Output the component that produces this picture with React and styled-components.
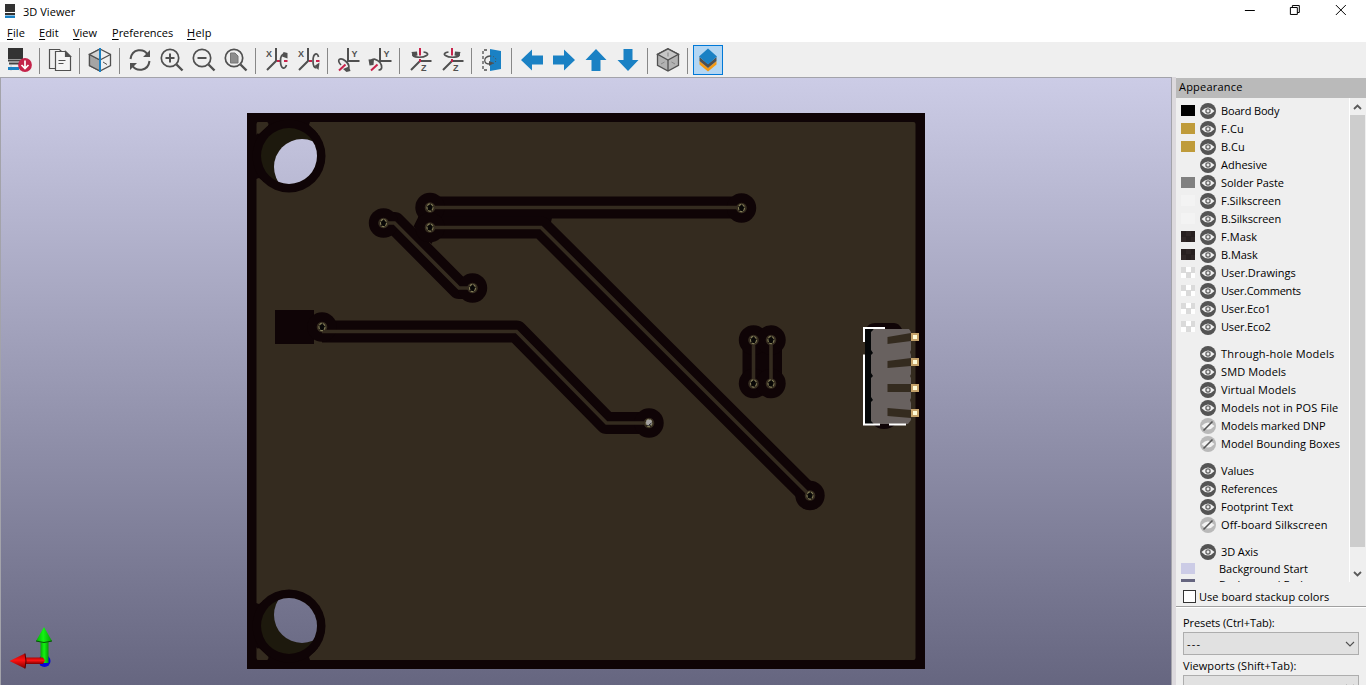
import React from "react";
import styled, { createGlobalStyle } from "styled-components";

const GlobalStyle = createGlobalStyle`
  * { box-sizing: border-box; }
  body { margin: 0; overflow: hidden; }
`;

const Window = styled.div`
  width: 1366px;
  height: 685px;
  display: flex;
  flex-direction: column;
  overflow: hidden;
  background: #fff;
  color: #000;
  font-family: "Open Sans", "Noto Sans", sans-serif;
  font-size: 11px;
`;

const TitleBar = styled.header`
  height: 24px;
  flex: none;
  display: flex;
  align-items: center;
  padding-left: 4px;
`;

const AppIcon = styled.svg`
  width: 12px;
  height: 16px;
  margin: 0 1px 3px 0;
`;

const Title = styled.span`
  flex: 1;
  margin-left: 6px;
  line-height: 22px;
  letter-spacing: 0.04px;
`;

const WindowButtons = styled.div`
  display: flex;
  width: 137px;
  height: 24px;
`;

const WindowButton = styled.svg`
  flex: 1;
  height: 22px;
  fill: none;
  stroke: #000;
  stroke-width: 1;
`;

const MenuBar = styled.nav`
  height: 18px;
  flex: none;
  display: flex;
  padding-left: 7px;
`;

const MenuItem = styled.span`
  width: ${(p) => p.$width}px;
  line-height: 17px;
  letter-spacing: ${(p) => p.$spacing || 0}px;
  white-space: nowrap;
  u { text-underline-offset: 2px; }
`;

const Toolbar = styled.div`
  height: 35px;
  flex: none;
  display: flex;
  align-items: center;
  padding-left: 4px;
  background: #efefef;
`;

const ToolButton = styled.div`
  width: ${(p) => (p.$active ? 30 : 32)}px;
  height: 30px;
  margin: 1px ${(p) => (p.$active ? 1 : 0)}px 0;
  display: flex;
  align-items: center;
  justify-content: center;
  border: ${(p) => (p.$active ? "1px solid #0078d7" : "none")};
  background: ${(p) => (p.$active ? "#b3d6f3" : "transparent")};
`;

const ToolSeparator = styled.div`
  width: 1px;
  height: 26px;
  margin: 2px 4px 0 3px;
  background: #878787;
`;

const ToolIcon = styled.svg`
  width: 24px;
  height: 24px;
  display: block;
  fill: none;
  stroke: #505050;
  stroke-width: 2;
  overflow: visible;
  text {
    font: 700 9px "Liberation Sans", sans-serif;
    fill: #505050;
    stroke: none;
  }
`;

const Workspace = styled.main`
  flex: 1;
  min-height: 0;
  display: flex;
  background: #efefef;
`;

const Viewport = styled.svg`
  width: 1172px;
  height: 608px;
  flex: none;
  display: block;
`;

const Panel = styled.aside`
  width: 194px;
  height: 608px;
  flex: none;
  display: flex;
  flex-direction: column;
  border-left: 4px solid #dcd9dd;
  background: #efefef;
`;

const PanelTitle = styled.div`
  height: 20px;
  margin-top: 1px;
  flex: none;
  padding-left: 3px;
  line-height: 17px;
  letter-spacing: 0.2px;
  background: #bababa;
`;

const ScrollArea = styled.div`
  height: 484px;
  flex: none;
  display: flex;
  overflow: hidden;
`;

const LayerList = styled.div`
  width: 174px;
  padding-top: 4px;
  border-right: 1px solid #fff;
`;

const LayerRow = styled.div`
  height: ${(p) => (p.$plain ? 16 : 18)}px;
  margin-top: ${(p) => (p.$gap ? 9 : 0)}px;
  padding-left: 5px;
  display: flex;
  align-items: center;
`;

const Swatch = styled.span`
  width: 14px;
  height: 11px;
  margin: 0 5px 1px 0;
  background: ${(p) => p.$fill};
`;

const EyeIcon = styled.svg`
  width: 16px;
  height: 16px;
  flex: none;
  visibility: ${(p) => (p.$hidden ? "hidden" : "visible")};
`;

const LayerName = styled.span`
  margin-left: ${(p) => (p.$tight ? 3 : 5)}px;
  white-space: nowrap;
  line-height: 16px;
  letter-spacing: ${(p) => p.$spacing}px;
`;

const Scrollbar = styled.div`
  width: 15px;
  display: flex;
  flex-direction: column;
`;

const ScrollArrow = styled.svg`
  width: 15px;
  height: 17px;
  flex: none;
  fill: none;
  stroke: #5a5a5a;
  stroke-width: 1.8;
`;

const ScrollThumb = styled.div`
  height: 432px;
  flex: none;
  margin-bottom: auto;
  background: #cdcdcd;
`;

const StackupOption = styled.label`
  height: 24px;
  flex: none;
  display: flex;
  align-items: center;
  padding: 5px 0 0 7px;
  letter-spacing: 0.03px;
`;

const CheckBox = styled.span`
  width: 13px;
  height: 13px;
  margin-right: 3px;
  border: 1px solid #333;
  background: #fff;
`;

const Divider = styled.div`
  height: 2px;
  flex: none;
  background: #a0a0a0;
  border-bottom: 1px solid #fff;
`;

const PresetGroup = styled.div`
  padding: 6px 7px 0;
`;

const PresetLabel = styled.div`
  height: 18px;
  line-height: 18px;
  letter-spacing: ${(p) => p.$spacing || 0}px;
`;

const Dropdown = styled.div`
  height: 23px;
  margin-bottom: 2px;
  padding: 0 3px;
  display: flex;
  align-items: center;
  justify-content: space-between;
  border: 1px solid #adadad;
  background: #e1e1e1;
  letter-spacing: 1.2px;
`;

const DropArrow = styled.svg`
  width: 10px;
  height: 8px;
  fill: none;
  stroke: #505050;
  stroke-width: 1.1;
`;

const Chip = () => (
  <>
    <path d="M0 0h15v11H0z" fill="#333" stroke="none" />
    <path d="M0 11.500h15v2H0zM1 14.500h13v2H1z" fill="#444" stroke="none" />
    <path d="M3 17v6M12 17v6" stroke="#ccc" strokeWidth="1" />
    <path d="M0 19h11v3H0z" fill="#1a81c4" stroke="none" />
  </>
);

const Rotation = ({ axis, reverse }) => {
  if (axis === "X")
    return (
      <>
        <text x="2" y="8.700">X</text>
        <path d="M12 0v13L3 22" />
        <path d="M13 13h3M20 13h3.500" stroke="#c8234b" />
        {reverse ? (
          <>
            <path d="M22.500 9c-1-5-5.500-4-5.500 4 0 5 1.500 7 3.500 7" strokeWidth="1.700" />
            <path d="m23.500 14.500-5 3.500 4 4z" fill="#505050" stroke="none" />
          </>
        ) : (
          <>
            <path d="M20.500 6c-2 0-4 2-4 7 0 8 4.500 9 6 4" strokeWidth="1.700" />
            <path d="m18 8.500 1.500-4.500 4 1v5.500z" fill="#505050" stroke="none" />
          </>
        )}
      </>
    );
  if (axis === "Y")
    return (
      <>
        <text x="15.500" y="8.700">Y</text>
        <path d="M12 0v13h11.500" />
        <path d="m9.500 16.500-6.500 6" stroke="#c8234b" />
        {reverse ? (
          <>
            <path d="M3 13c2-3 6-2 9 1.500 3 4 2 7.500-1.500 7.500" strokeWidth="1.700" />
            <path d="M.5 11.500 6 11l-.5 6-4 .5z" fill="#505050" stroke="none" />
          </>
        ) : (
          <>
            <path d="M5 17C0 12 4 8.500 9.500 13c4 3.500 4 6 2.500 8" strokeWidth="1.700" />
            <path d="m7 21 6-2.500 1.500 4.500-4 1z" fill="#505050" stroke="none" />
          </>
        )}
      </>
    );
  return (
    <>
      <text x="13" y="23">Z</text>
      <path d="M12 13h11.500M12 13l-9 9" />
      <path d="M12 0v7.500M12 11v3" stroke="#c8234b" />
      <g transform={reverse ? "matrix(-1 0 0 1 24 0)" : undefined}>
        <path d="M5 6c-2 4 10 4 13.500 1.500C21 6 19 4.500 15.500 4" strokeWidth="1.700" />
        <path d="m3.500 4 5.500-.5.500 4L5 8.500z" fill="#505050" stroke="none" />
      </g>
    </>
  );
};

const icons = {
  reload: (
    <>
      <Chip />
      <circle cx="17" cy="17" r="6.900" fill="#c4234a" stroke="none" />
      <path d="M17 12.500v8M13.500 17l3.500 3.500 3.500-3.500" stroke="#fff" strokeWidth="1.700" />
    </>
  ),
  copy: (
    <g strokeWidth="1.200">
      <path d="M7 20.500H1.500V1.500h10l2 2" />
      <path d="M7.500 3.500h10l5 5v14h-15z" fill="#f4f4f4" />
      <path d="M17.500 3.500v5h5z" fill="#505050" />
      <path d="M10.500 12.500h7M10.500 15.500h5" />
    </g>
  ),
  cube: (
    <g strokeWidth="1.300">
      <path d="m12 1 10.500 5.500v11L12 23 1.500 17.500v-11z" fill="#efefef" />
      <path d="M1.500 6.500 12 12v11L1.500 17.500z" fill="#a5a5a5" />
      <path d="M1.500 6.500 12 1v11z" fill="#d4d4d4" />
      <path d="m12 12 10.500-5.500" />
      <path d="m15 14 4 2.500" strokeWidth="1" />
      <path d="M12 0v24" stroke="#1a81c4" strokeWidth="2" />
    </g>
  ),
  refresh: (
    <>
      <path d="M2.500 11C4 0 16 0 20 7M21.500 13C20 24 8 24 4 17" />
      <path d="M22 2v7h-7zM2 22v-7h7z" fill="#505050" stroke="none" />
    </>
  ),
  rotX: <Rotation axis="X" />,
  rotXr: <Rotation axis="X" reverse />,
  rotY: <Rotation axis="Y" />,
  rotYr: <Rotation axis="Y" reverse />,
  rotZ: <Rotation axis="Z" />,
  rotZr: <Rotation axis="Z" reverse />,
  flip: (
    <>
      <path d="M7 2H3v20h4" strokeWidth="1.300" strokeDasharray="3 2" />
      <path d="M10 1l11 2v18l-11 2z" fill="#1a81c4" stroke="none" />
      <path d="M10 8c-7 1-7 8 0 8" strokeWidth="1.300" />
      <path d="M10 8c8 0 8 8 0 8" strokeWidth="1" strokeDasharray="1 2" />
      <path d="m9 13 5 2-5 3z" fill="#505050" stroke="none" />
    </>
  ),
  ortho: (
    <g strokeWidth="1.300">
      <path d="m12 .8 10.500 5.500v11L12 23 1.500 17.300v-11z" fill="#b2b2b2" />
      <path d="m12 .8 10.500 5.500L12 12 1.500 6.300z" fill="#c6c6c6" />
      <path d="M12 12v11" />
      <path d="M12 4.500v4M5 16l3.500-2M19 16l-3.500-2" strokeWidth="1" stroke="#858585" />
    </g>
  ),
  layers: (
    <g stroke="none">
      <path d="m3.500 13 8.500 7 8.500-7v3.500L12 23.500l-8.500-7z" fill="#f59a13" />
      <path d="m3.500 9 8.500 7 8.500-7v4L12 20l-8.500-7z" fill="#505050" />
      <path d="m12 .5 9 8-9 8-9-8z" fill="#1a81c4" />
    </g>
  ),
};

const zoomGlyph = {
  plus: <path d="M5.500 10h9M10 5.500v9" />,
  minus: <path d="M5.500 10h9" />,
  page: <path d="M6.500 5h4.500l3 3v7H6.500z" fill="#8c8c8c" stroke="#777" strokeWidth="1" />,
};
["plus", "minus", "page"].forEach((k) => {
  icons[k] = (
    <>
      <circle cx="10" cy="10" r="8.700" strokeWidth="1.700" />
      <path d="m16.500 16.500 6 6" strokeWidth="2.400" />
      {zoomGlyph[k]}
    </>
  );
});
[["left", 0], ["up", 90], ["right", 180], ["down", 270]].forEach(([k, a]) => {
  icons[k] = (
    <path
      d="M1 12 12 1.500v6h11v9H12v6z"
      fill="#1a81c4"
      stroke="none"
      transform={`rotate(${a} 12 12)`}
    />
  );
});

const toolbarItems = [
  "reload", "|", "copy", "|", "cube", "|", "refresh", "plus", "minus", "page", "|",
  "rotX", "rotXr", "|", "rotY", "rotYr", "|", "rotZ", "rotZr", "|", "flip", "|",
  "left", "right", "up", "down", "|", "ortho", "|", "layers",
];

const checker = (a, b) => `repeating-conic-gradient(${a} 0 25%, ${b} 0 50%) 0 0 / 10px 11px`;
const maskFill = checker("#2f2727", "#272020");
const userFill = checker("#fff", "#dadada");

const layers = [
  { name: "Board Body", fill: "#000", spacing: -0.16 },
  { name: "F.Cu", fill: "#bf9b3a", spacing: 0.2 },
  { name: "B.Cu", fill: "#bf9b3a", spacing: 0 },
  { name: "Adhesive", spacing: 0 },
  { name: "Solder Paste", fill: "#808080", spacing: -0.07 },
  { name: "F.Silkscreen", fill: "#f3f3f3", spacing: 0 },
  { name: "B.Silkscreen", fill: "#f3f3f3", spacing: -0.12 },
  { name: "F.Mask", fill: maskFill },
  { name: "B.Mask", fill: maskFill, spacing: -0.05 },
  { name: "User.Drawings", fill: userFill, spacing: 0 },
  { name: "User.Comments", fill: userFill, spacing: -0.23 },
  { name: "User.Eco1", fill: userFill, spacing: -0.15 },
  { name: "User.Eco2", fill: userFill, spacing: -0.15 },
  { name: "Through-hole Models", gap: true, spacing: 0.2 },
  { name: "SMD Models" },
  { name: "Virtual Models" },
  { name: "Models not in POS File", spacing: 0.14 },
  { name: "Models marked DNP", off: true, spacing: -0.06 },
  { name: "Model Bounding Boxes", off: true, spacing: 0.04 },
  { name: "Values", gap: true, spacing: -0.1 },
  { name: "References", spacing: -0.05 },
  { name: "Footprint Text", spacing: 0 },
  { name: "Off-board Silkscreen", off: true },
  { name: "3D Axis", gap: true, spacing: -0.1 },
  { name: "Background Start", fill: "#cccce6", plain: true, spacing: 0 },
  { name: "Background End", fill: "#666680", plain: true, spacing: 0 },
];

const Eye = ({ off, hidden }) => (
  <EyeIcon $hidden={hidden} viewBox="0 0 16 16">
    <circle cx="8" cy="8" r="8" fill={off ? "#b9b9b9" : "#545454"} />
    <path d="M1.500 8Q8 .8 14.500 8 8 15.200 1.500 8" fill="#f2f2f2" />
    {off ? (
      <path d="m3.500 12.500 9-9" stroke="#545454" strokeWidth="1.600" />
    ) : (
      <circle cx="8" cy="8" r="2.100" fill="#e8e8e8" stroke="#666" strokeWidth="1.300" />
    )}
  </EyeIcon>
);

const COPPER = "#342b1f";
const GAP = "#0f0406";

const tracks = [
  "M430 207.500H741",
  "M430 227.500H541L810 495.500",
  "M383 223H394.500L459 288H473",
  "M322 331.500H516.500L606.500 423H649",
  "M753.500 340V384",
  "M771 340V384",
];
const vias = [
  [430, 207.5], [430, 227.5], [741.5, 208], [383.5, 223], [472.5, 288], [810, 495.5],
  [322, 327], [649, 423], [753.5, 340], [771, 340], [753.5, 383.5], [771, 383.5],
];

const MountingHole = ({ id, flipped }) => (
  <g transform={flipped ? "matrix(1 0 0 -1 0 782)" : undefined}>
    <clipPath id={id}>
      <circle cx="289" cy="156" r="28" />
    </clipPath>
    <path d="M268 122h42l-1 3 9 9-54 48-5-4-3 1v-44z" fill={GAP} />
    <circle cx="289" cy="156" r="36.500" fill={GAP} />
    <path d="M257 122.500h10.500q2 1.500.5 3l-8.500 8q-2 1-2.500-1z" fill={COPPER} />
    <circle cx="289" cy="156" r="28" fill="#1d190d" />
    <g clipPath={`url(#${id})`}>
      <circle cx="302" cy="167" r="28" fill={flipped ? "url(#skyFlipped)" : "url(#sky)"} />
    </g>
  </g>
);

const Connector = () => (
  <g>
    <path d="M866 329q2-6 9-6h19q5 0 8 6z M873 424h23q-5 5-12 5t-11-5z" fill={GAP} />
    <path d="M865 329h8v95h-8z" fill="#050708" />
    <path
      d="M874 329h35l2 3v18l-1 2 1 3v19l-1 2 1 2v20l-1 2 1 3v17l-3 4h-34l-3-3v-19l2-2-2-3v-19l2-2-2-3v-18l2-2-2-3v-18z"
      fill="#68615f"
    />
    <path d="M864 342v-14h21M864 354.500v70h16M889 424.500h17" fill="none" stroke="#fff" strokeWidth="2" />
    <g fill={COPPER}>
      <path d="m887.500 337 23.500-4v8l-23.500 3z" />
      <path d="m887.500 361 23.500-3v8l-23.500 2z" />
      <path d="M887.500 384H911v8h-23.500z" />
      <path d="m887.500 408 23.500 2v8l-23.500-2z" />
    </g>
    {[333, 358, 384, 409].map((y) => (
      <g key={y}>
        <path d={`M911 ${y}h8v8h-8z`} fill="#c5a26a" />
        <path d={`M913 ${y + 2}h4v4h-4z`} fill="#fffbd8" />
      </g>
    ))}
  </g>
);

const AxisGizmo = () => (
  <g>
    <circle cx="44.500" cy="661" r="6" fill="#0808d8" />
    <path d="M40.500 642h8v21h-8z" fill="url(#green)" />
    <path d="m44 627 8 14q-8 3-16 0z" fill="url(#green)" />
    <path d="M36 641q8 3 16 0" stroke="#075007" fill="none" />
    <path d="M25 657.500h18l2 3-2 3.500H25z" fill="url(#red)" />
    <path d="M9.500 661 25 653.500q2 7.500 0 15z" fill="url(#red)" />
    <path d="M25 653.500q2 7.500 0 15" stroke="#500" fill="none" />
  </g>
);

const BoardView = () => (
  <Viewport viewBox="0 77 1172 608">
    <defs>
      <linearGradient id="sky" gradientUnits="userSpaceOnUse" x1="0" y1="78" x2="0" y2="685">
        <stop stopColor="#cccce6" />
        <stop offset="1" stopColor="#666680" />
      </linearGradient>
      <linearGradient id="skyFlipped" gradientUnits="userSpaceOnUse" x1="0" y1="704" x2="0" y2="97">
        <stop stopColor="#cccce6" />
        <stop offset="1" stopColor="#666680" />
      </linearGradient>
      <linearGradient id="green">
        <stop stopColor="#08a808" />
        <stop offset=".45" stopColor="#12f512" />
        <stop offset="1" stopColor="#079a07" />
      </linearGradient>
      <linearGradient id="red" x2="0" y2="1">
        <stop stopColor="#b00505" />
        <stop offset=".45" stopColor="#ff1212" />
        <stop offset="1" stopColor="#7c0000" />
      </linearGradient>
    </defs>
    <path d="M0 77h1172v608H0z" fill="url(#sky)" />
    <path d="M247 113h678v556H247z" fill={GAP} />
    <rect x="256.500" y="122" width="659" height="538" rx="2" fill={COPPER} />
    <MountingHole id="holeTop" />
    <MountingHole id="holeBottom" flipped />
    <path d="M275 310h39v34h-39z" fill={GAP} />
    <path d="M314 315h8v24h-8zM430 218H552l-3 12H430zM413.500 226.500l4.500-9 2-6 20 26-7 3.500-1.500 3z" fill={GAP} />
    <g fill="none" stroke={GAP} strokeWidth="22" strokeLinejoin="round">
      {tracks.map((d) => <path key={d} d={d} />)}
    </g>
    {vias.map(([x, y]) => <circle key={`${x} ${y}`} cx={x} cy={y} r="14.700" fill={GAP} />)}
    <g fill="none" stroke={COPPER} strokeWidth="3.600">
      {tracks.map((d) => <path key={d} d={d} />)}
    </g>
    {vias.map(([x, y]) => (
      <g key={`${x} ${y}`}>
        <circle cx={x} cy={y} r="5.300" fill={COPPER} />
        <ellipse cx={x} cy={y} rx="3" ry="3.600" fill="#080706" stroke="#837d58" strokeWidth="1.100" strokeDasharray="3 1" />
      </g>
    ))}
    <circle cx="649" cy="422.500" r="3" fill="#a3a1a0" />
    <path d="m649 425 2.500-2" stroke="#222" fill="none" />
    <Connector />
    <path d="M0 77.500h1172M.5 77v608M1171.500 77v608" stroke="#a3a3aa" fill="none" />
    <AxisGizmo />
  </Viewport>
);

export default function App() {
  return (
    <Window>
      <GlobalStyle />
      <TitleBar>
        <AppIcon viewBox="0 0 12 16">
          <path d="M1 1h10v8H1zM1 10h10v2H1z" fill="#333" />
          <path d="M1 12.500h10V15H1z" fill="#1a81c4" />
        </AppIcon>
        <Title>3D Viewer</Title>
        <WindowButtons>
          <WindowButton viewBox="0 0 46 22"><path d="M16 10.500h10" /></WindowButton>
          <WindowButton viewBox="0 0 46 22"><path d="M15.500 7.500h7v7h-7zM17.500 7.500V5.500h7v7h-2" /></WindowButton>
          <WindowButton viewBox="0 0 46 22"><path d="m16 5 10 10m0-10-10 10" /></WindowButton>
        </WindowButtons>
      </TitleBar>
      <MenuBar>
        <MenuItem $width={32} $spacing={0.2}><u>F</u>ile</MenuItem>
        <MenuItem $width={34}><u>E</u>dit</MenuItem>
        <MenuItem $width={39}><u>V</u>iew</MenuItem>
        <MenuItem $width={75}><u>P</u>references</MenuItem>
        <MenuItem $width={30} $spacing={0.25}><u>H</u>elp</MenuItem>
      </MenuBar>
      <Toolbar>
        {toolbarItems.map((name, i) =>
          name === "|" ? (
            <ToolSeparator key={i} />
          ) : (
            <ToolButton key={i} $active={name === "layers"}>
              <ToolIcon viewBox="0 0 24 24">{icons[name]}</ToolIcon>
            </ToolButton>
          )
        )}
      </Toolbar>
      <Workspace>
        <BoardView />
        <Panel>
          <PanelTitle>Appearance</PanelTitle>
          <ScrollArea>
            <LayerList>
              {layers.map((l) => (
                <LayerRow key={l.name} $gap={l.gap} $plain={l.plain}>
                  <Swatch $fill={l.fill || "transparent"} />
                  <Eye off={l.off} hidden={l.plain} />
                  <LayerName $tight={l.plain} $spacing={l.spacing ?? 0.1}>{l.name}</LayerName>
                </LayerRow>
              ))}
            </LayerList>
            <Scrollbar>
              <ScrollArrow viewBox="0 0 15 17"><path d="m4 11 3.500-3.500L11 11" /></ScrollArrow>
              <ScrollThumb />
              <ScrollArrow viewBox="0 0 15 17"><path d="m4 7 3.500 3.500L11 7" /></ScrollArrow>
            </Scrollbar>
          </ScrollArea>
          <StackupOption><CheckBox />Use board stackup colors</StackupOption>
          <Divider />
          <PresetGroup>
            <PresetLabel $spacing={-0.1}>Presets (Ctrl+Tab):</PresetLabel>
            <Dropdown>
              ---
              <DropArrow viewBox="0 0 10 8"><path d="m1 2 4 4 4-4" /></DropArrow>
            </Dropdown>
            <PresetLabel $spacing={0.08}>Viewports (Shift+Tab):</PresetLabel>
            <Dropdown>
              ---
              <DropArrow viewBox="0 0 10 8"><path d="m1 2 4 4 4-4" /></DropArrow>
            </Dropdown>
          </PresetGroup>
        </Panel>
      </Workspace>
    </Window>
  );
}
